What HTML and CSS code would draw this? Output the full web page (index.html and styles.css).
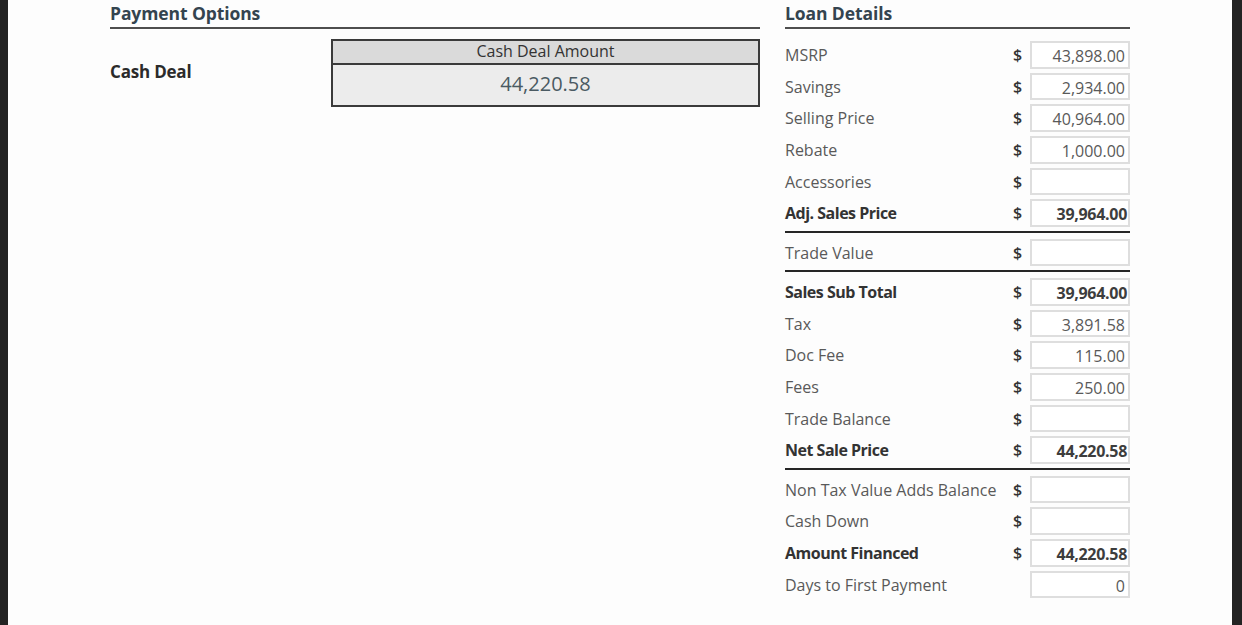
FILE: index.html
```html
<!DOCTYPE html>
<html lang="en">
<head>
<meta charset="utf-8">
<title>Payment Options</title>
<link rel="stylesheet" href="styles.css">
</head>
<body>
<div class="frame">
  <main class="page">
    <section class="col-left">
      <h2 class="heading">Payment Options</h2>
      <div class="deal-row">
        <div class="deal-label">Cash Deal</div>
        <div class="deal-box">
          <div class="deal-box-head">Cash Deal Amount</div>
          <div class="deal-box-value">44,220.58</div>
        </div>
      </div>
    </section>
    <section class="col-right">
      <h2 class="heading">Loan Details</h2>
      <div class="rows">
        <div class="row"><span class="lbl">MSRP</span><span class="cur">$</span><span class="val">43,898.00</span></div>
        <div class="row"><span class="lbl">Savings</span><span class="cur">$</span><span class="val">2,934.00</span></div>
        <div class="row"><span class="lbl">Selling Price</span><span class="cur">$</span><span class="val">40,964.00</span></div>
        <div class="row"><span class="lbl">Rebate</span><span class="cur">$</span><span class="val">1,000.00</span></div>
        <div class="row"><span class="lbl">Accessories</span><span class="cur">$</span><span class="val"></span></div>
        <div class="row strong"><span class="lbl">Adj. Sales Price</span><span class="cur">$</span><span class="val">39,964.00</span></div>
        <div class="sep"></div>
        <div class="row"><span class="lbl">Trade Value</span><span class="cur">$</span><span class="val"></span></div>
        <div class="sep"></div>
        <div class="row strong"><span class="lbl">Sales Sub Total</span><span class="cur">$</span><span class="val">39,964.00</span></div>
        <div class="row"><span class="lbl">Tax</span><span class="cur">$</span><span class="val">3,891.58</span></div>
        <div class="row"><span class="lbl">Doc Fee</span><span class="cur">$</span><span class="val">115.00</span></div>
        <div class="row"><span class="lbl">Fees</span><span class="cur">$</span><span class="val">250.00</span></div>
        <div class="row"><span class="lbl">Trade Balance</span><span class="cur">$</span><span class="val"></span></div>
        <div class="row strong"><span class="lbl">Net Sale Price</span><span class="cur">$</span><span class="val">44,220.58</span></div>
        <div class="sep"></div>
        <div class="row"><span class="lbl">Non Tax Value Adds Balance</span><span class="cur">$</span><span class="val"></span></div>
        <div class="row"><span class="lbl">Cash Down</span><span class="cur">$</span><span class="val"></span></div>
        <div class="row strong"><span class="lbl">Amount Financed</span><span class="cur">$</span><span class="val">44,220.58</span></div>
        <div class="row"><span class="lbl">Days to First Payment</span><span class="cur"></span><span class="val">0</span></div>
      </div>
    </section>
  </main>
</div>
</body>
</html>
```
FILE: styles.css
```css
* { box-sizing: border-box; }

html, body {
  margin: 0;
  padding: 0;
  height: 100%;
}

body {
  background: #232323;
  font-family: "Open Sans", "Liberation Sans", sans-serif;
  font-size: 16px;
  color: #595959;
  overflow: hidden;
}

.frame {
  display: flex;
  height: 625px;
  padding: 0 10px 0 8px;
}

.page {
  flex: 1;
  background: #fdfdfd;
  display: flex;
  align-items: flex-start;
  gap: 25px;
  padding: 2px 0 0 102px;
}

.col-left {
  width: 650px;
}

.col-right {
  width: 345px;
}

.heading {
  margin: 0;
  font-size: 17.5px;
  font-weight: 700;
  line-height: 22px;
  color: #34444f;
  letter-spacing: -0.1px;
  padding-bottom: 3px;
  border-bottom: 2px solid #4e4e4e;
}

/* left: cash deal */
.deal-row {
  display: flex;
  align-items: center;
  margin-top: 10px;
}

.deal-label {
  width: 221px;
  font-size: 17px;
  font-weight: 700;
  color: #2b2b2b;
  letter-spacing: -0.2px;
  padding-bottom: 4px;
}

.deal-box {
  flex: 1;
  border: 2px solid #3a3a3a;
}

.deal-box-head {
  height: 24px;
  line-height: 20px;
  text-align: center;
  background: #dadada;
  color: #333;
  border-bottom: 2px solid #3a3a3a;
}

.deal-box-value {
  height: 40px;
  line-height: 37px;
  text-align: center;
  background: #ececec;
  font-size: 20px;
  color: #4a5a62;
}

/* right: loan details */
.rows {
  display: flex;
  flex-direction: column;
  gap: 4px;
  margin-top: 12px;
}

.row {
  display: flex;
  align-items: center;
  height: 27.7px;
}

.lbl {
  flex: 1;
  white-space: nowrap;
  color: #595959;
}

.cur {
  width: 25px;
  text-align: center;
  font-weight: 600;
  color: #333;
}

.val {
  width: 100px;
  height: 100%;
  border: 2px solid #dedede;
  background: #fff;
  text-align: right;
  padding: 2px 3px 0 0;
  line-height: 23px;
  color: #595959;
}

.row.strong .lbl {
  font-weight: 700;
  color: #333;
  letter-spacing: -0.5px;
}

.row.strong .val {
  font-weight: 700;
  color: #3d3d3d;
  letter-spacing: -0.3px;
  padding-right: 1px;
}

.sep {
  height: 2px;
  background: #262626;
  margin-bottom: 1.6px;
}
```
